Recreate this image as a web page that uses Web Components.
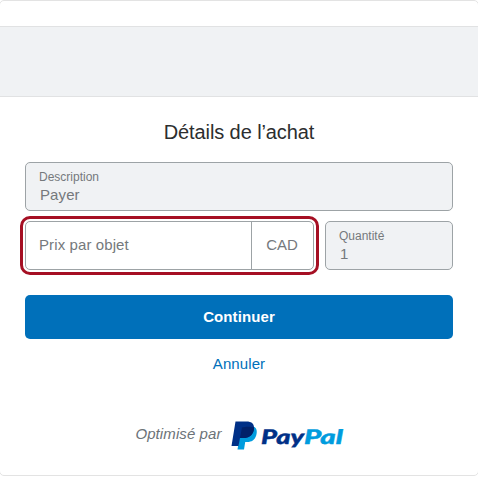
<!DOCTYPE html>
<html lang="fr">
<head>
<meta charset="utf-8">
<title>Détails de l’achat</title>
<style>
body {
    margin: 0;
    overflow: hidden;
    background: #ffffff;
    color: #6c7378;
    font-family: "Liberation Sans", Arial, sans-serif;
}
</style>
</head>
<body>
<checkout-card>
    <purchase-form></purchase-form>
    <powered-by slot="footer" text-label="Optimisé par"></powered-by>
</checkout-card>

<script>
class CheckoutCard extends HTMLElement {
    constructor() {
        super();
        this.attachShadow({ mode: 'open' });
        this.shadowRoot.innerHTML = /*html*/`
            <style>
            * {
                box-sizing: border-box;
            }
            :host {
                display: flex;
                flex-direction: column;
                box-sizing: border-box;
                height: 476px;
                margin: 0 -1px;
                border: 1px solid #e3e3e3;
                border-radius: 5px;
                background: #ffffff;
            }
            #banner {
                height: 71px;
                margin-top: 25px;
                border-top: 1px solid #e1e2e3;
                border-bottom: 1px solid #e1e2e3;
                background: #f0f2f4;
            }
            #content {
                padding: 0 25px;
            }
            #footer {
                margin-top: 47px;
            }
            </style>

            <div id="banner"></div>
            <div id="content"><slot></slot></div>
            <div id="footer"><slot name="footer"></slot></div>
        `;
    }
}
window.customElements.define('checkout-card', CheckoutCard);


class TextField extends HTMLElement {
    constructor() {
        super();
        this.attachShadow({ mode: 'open' });
        this.shadowRoot.innerHTML = /*html*/`
            <style>
            :host {
                display: flex;
                box-sizing: border-box;
                height: 49px;
                border: 1px solid #9da3a6;
                border-radius: 5px;
                background: #ffffff;
                color: #75797c;
                font-size: 15px;
                line-height: 18px;
            }
            :host([readonly]) {
                background: #f0f2f4;
            }
            #text {
                flex: 1;
                display: flex;
                flex-direction: column;
                justify-content: center;
                padding-left: 13px;
                padding-bottom: 1px;
            }
            #label {
                font-size: 12px;
                line-height: 16px;
                margin-bottom: 1px;
            }
            #label:empty {
                display: none;
            }
            #value {
                letter-spacing: 0.1px;
            }
            #label:not(:empty) + #value {
                padding-left: 1px;
            }
            #unit {
                display: flex;
                align-items: center;
                justify-content: center;
                box-sizing: border-box;
                width: 62px;
                padding-bottom: 1px;
                padding-right: 1px;
                border-left: 1px solid #9da3a6;
            }
            </style>

            <div id="text"><span id="label"></span><span id="value"></span></div>
        `;
    }

    connectedCallback() {
        let root = this.shadowRoot;
        root.getElementById('label').textContent = this.getAttribute('text-label') || '';
        root.getElementById('value').textContent = this.getAttribute('value') || '';

        if (this.hasAttribute('unit')) {
            let unit = document.createElement('div');
            unit.id = 'unit';
            unit.textContent = this.getAttribute('unit');
            root.appendChild(unit);
        }
    }
}
window.customElements.define('text-field', TextField);


class PurchaseForm extends HTMLElement {
    constructor() {
        super();
        this.attachShadow({ mode: 'open' });
        this.shadowRoot.innerHTML = /*html*/`
            <style>
            :host {
                display: flex;
                flex-direction: column;
            }
            h1 {
                margin: 22px 0 17px;
                color: #2c2e2f;
                font-size: 20px;
                font-weight: normal;
                letter-spacing: -0.1px;
                line-height: 26px;
                text-align: center;
            }
            #row {
                display: flex;
                gap: 11px;
                margin-top: 10px;
            }
            #price {
                width: 289px;
                outline: 3px solid #a50f23;
                outline-offset: 2px;
            }
            #quantity {
                flex: 1;
            }
            button {
                height: 44px;
                margin-top: 25px;
                padding: 0 0 1px;
                border: 0;
                border-radius: 5px;
                background: #0070ba;
                color: #ffffff;
                font: bold 15px "Liberation Sans", Arial, sans-serif;
                letter-spacing: 0.1px;
            }
            a {
                align-self: center;
                margin-top: 16px;
                color: #0070ba;
                font-size: 15px;
                letter-spacing: 0.1px;
                line-height: 18px;
                text-decoration: none;
            }
            </style>

            <h1>Détails de l’achat</h1>
            <text-field text-label="Description" value="Payer" readonly></text-field>
            <div id="row">
                <text-field id="price" value="Prix par objet" unit="CAD"></text-field>
                <text-field id="quantity" text-label="Quantité" value="1" readonly></text-field>
            </div>
            <button type="button">Continuer</button>
            <a href="#">Annuler</a>
        `;
    }
}
window.customElements.define('purchase-form', PurchaseForm);


class PaypalLogo extends HTMLElement {
    constructor() {
        super();
        this.attachShadow({ mode: 'open' });
        this.shadowRoot.innerHTML = /*html*/`
            <style>
            :host {
                display: block;
                width: 113px;
                height: 30px;
            }
            svg {
                display: block;
            }
            text {
                font-family: Lato, sans-serif;
                font-size: 20px;
                font-weight: 900;
                font-style: italic;
                stroke-width: 0.4px;
                text-rendering: geometricPrecision;
            }
            </style>

            <svg width="113" height="30" viewBox="0 0 113 30">
                <path fill="#009cde" d="M10 7h13.500c2.500 1.500 2.800 5 1.700 8.500c-1.500 4.500-4.500 6.500-9 6.500h-2l-1.200 7.500h-6.500z"/>
                <path fill="#003087" d="M4.500 1.500h10.500c6 0 9 2.500 7.800 8.500c-1.200 5.500-5 8-10.500 8h-3.300l-1.500 8h-7z"/>
                <path fill="#012169" d="M11 7.500c3.500-1.200 9-1 12-.2c.2 1 0 1.800-.2 2.700c-1.200 5.500-5 8-10.500 8h-3.300z"/>
                <text x="30" y="23.500" textLength="43" lengthAdjust="spacingAndGlyphs" fill="#003087" stroke="#003087">Pay</text>
                <text x="73" y="23.500" textLength="39" lengthAdjust="spacingAndGlyphs" fill="#009cde" stroke="#009cde">Pal</text>
            </svg>
        `;
    }
}
window.customElements.define('paypal-logo', PaypalLogo);


class PoweredBy extends HTMLElement {
    constructor() {
        super();
        this.attachShadow({ mode: 'open' });
        this.shadowRoot.innerHTML = /*html*/`
            <style>
            :host {
                display: flex;
                justify-content: center;
                align-items: center;
                gap: 9px;
                padding-left: 1px;
                font-size: 15px;
                font-style: italic;
            }
            #label {
                padding-bottom: 3px;
                letter-spacing: 0.1px;
            }
            </style>

            <span id="label"></span>
            <paypal-logo></paypal-logo>
        `;
    }

    connectedCallback() {
        this.shadowRoot.getElementById('label').textContent = this.getAttribute('text-label');
    }
}
window.customElements.define('powered-by', PoweredBy);
</script>
</body>
</html>
